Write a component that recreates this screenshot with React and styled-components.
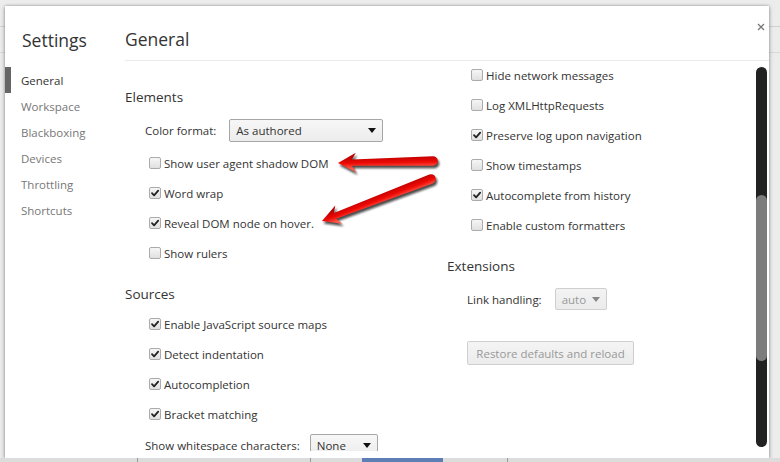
import React from 'react';
import styled, { createGlobalStyle } from 'styled-components';

const Global = createGlobalStyle`
  html, body {
    margin: 0;
    padding: 0;
  }
  body {
    font-family: "Open Sans", "Noto Sans", sans-serif;
    color: #333;
    background: #ececec;
  }
`;

const Page = styled.div`
  position: relative;
  width: 780px;
  height: 462px;
  overflow: hidden;
  padding: 6px 0 0 5px;
  box-sizing: border-box;
  background:
    linear-gradient(#d2d2d2, #d2d2d2) 0 26px / 100% 1px no-repeat,
    linear-gradient(#d8d8d8, #d8d8d8) 0 52px / 100% 1px no-repeat,
    #ececec;
`;

const Dialog = styled.div`
  width: 764px;
  height: 452px;
  background: #fff;
  display: flex;
  box-shadow: 0 0 3px rgba(0, 0, 0, 0.35), 0 2px 5px rgba(0, 0, 0, 0.18);
`;

const Sidebar = styled.div`
  width: 120px;
  flex: none;
`;

const SidebarTitle = styled.div`
  height: 61px;
  box-sizing: border-box;
  padding: 24px 0 0 17px;
  font-size: 17.5px;
  line-height: 20px;
  color: #333;
`;

const NavItem = styled.div`
  height: 25px;
  padding: 1px 0 0 16px;
  line-height: 26px;
  font-size: 11.5px;
  color: ${p => (p.$active ? '#333' : '#777')};
  box-shadow: ${p => (p.$active ? 'inset 6px 0 0 #666' : 'none')};
`;

const Main = styled.div`
  flex: 1;
  display: flex;
  flex-direction: column;
  min-width: 0;
`;

const Header = styled.div`
  height: 54px;
  border-bottom: 1px solid #eaeaea;
  display: flex;
  align-items: flex-start;
  flex: none;
`;

const HeaderTitle = styled.div`
  padding-top: 23px;
  font-size: 17.5px;
  line-height: 20px;
  color: #333;
`;

const CloseButton = styled.div`
  margin: 15px 2px 0 auto;
  width: 12px;
  height: 12px;
  display: flex;
  align-items: center;
  justify-content: center;
`;

const Scroller = styled.div`
  height: 390px;
  display: flex;
  overflow: hidden;
`;

const Columns = styled.div`
  flex: 1;
  display: flex;
  min-width: 0;
`;

const Column = styled.div`
  width: ${p => (p.$width ? `${p.$width}px` : 'auto')};
  flex: ${p => (p.$width ? 'none' : '1')};
  padding-top: ${p => p.$top || 0}px;
  margin-top: ${p => p.$shift || 0}px;
`;

const SectionTitle = styled.div`
  height: 20px;
  line-height: 20px;
  font-size: 13.5px;
  color: #333;
  margin-top: ${p => (p.$first ? 0 : 16)}px;
  margin-bottom: 5px;
`;

const Row = styled.label`
  height: 30px;
  display: flex;
  align-items: center;
  padding-left: 20px;
  font-size: 11.5px;
  color: #333;
  white-space: nowrap;
`;

const SelectRow = styled(Row)`
  height: ${p => p.$height || 36}px;
`;

const Box = styled.span`
  width: 12px;
  height: 12px;
  box-sizing: border-box;
  margin: 0 3px 0 4px;
  border: 1px solid #ababab;
  border-radius: 2px;
  background: linear-gradient(#f6f6f6, #e0e0e0);
  display: flex;
  align-items: center;
  justify-content: center;
  flex: none;
`;

const Select = styled.span`
  width: ${p => p.$width}px;
  height: ${p => p.$height || 23}px;
  box-sizing: border-box;
  margin-left: ${p => p.$gap}px;
  border: 1px solid ${p => (p.$disabled ? '#cfcfcf' : '#a6a6a6')};
  border-radius: 2px;
  background: ${p => (p.$disabled ? 'linear-gradient(#f3f3f3, #ebebeb)' : 'linear-gradient(#f7f7f7, #ececec)')};
  display: flex;
  align-items: center;
  justify-content: space-between;
  padding: 0 6px 0 6px;
  font-size: 11.5px;
  color: ${p => (p.$disabled ? '#999' : '#333')};
`;

const Caret = styled.span`
  width: 0;
  height: 0;
  border-left: 4.5px solid transparent;
  border-right: 4.5px solid transparent;
  border-top: 5px solid ${p => (p.$disabled ? '#888' : '#111')};
`;

const Button = styled.div`
  margin: 24px 0 0 20px;
  width: 167px;
  height: 24px;
  box-sizing: border-box;
  border: 1px solid #cfcfcf;
  border-radius: 2px;
  background: linear-gradient(#f4f4f4, #ececec);
  color: #999;
  font-size: 11.5px;
  display: flex;
  align-items: center;
  justify-content: center;
`;

const ScrollTrack = styled.div`
  width: 11px;
  flex: none;
  margin: 6px 2px 4px 0;
  border-radius: 6px;
  background: #222;
  display: flex;
  flex-direction: column;
  overflow: hidden;
`;

const ScrollThumb = styled.div`
  margin-top: 128px;
  height: 166px;
  border-radius: 6px;
  background: #7c7c7c;
`;

const Strip = styled.div`
  height: 4px;
  margin-left: -5px;
  display: flex;
  background: #dcdcdc;
`;

const StripPiece = styled.div`
  margin-left: ${p => p.$gap}px;
  width: ${p => p.$width}px;
  background: ${p => p.$color};
`;

const Overlay = styled.svg`
  position: absolute;
  left: 0;
  top: 0;
  pointer-events: none;
`;

const Check = () => (
  <svg width="10" height="10" viewBox="0 0 10 10">
    <path d="M2 5.2 L4.1 7.3 L8.2 2.6" fill="none" stroke="#222" strokeWidth="1.8" strokeLinecap="round" strokeLinejoin="round" />
  </svg>
);

const Checkbox = ({ checked, children }) => (
  <Row>
    <Box>{checked && <Check />}</Box>
    {children}
  </Row>
);

const Arrow = ({ x1, y1, x2, y2 }) => {
  const L = Math.hypot(x2 - x1, y2 - y1);
  const a = (Math.atan2(y2 - y1, x2 - x1) * 180) / Math.PI;
  const d = `M0,-4.8 A4.8,4.8 0 0 0 0,4.8 L${L - 14},3.1 L${L - 18},9.8 L${L},0 L${L - 18},-9.8 L${L - 14},-3.1 Z`;
  return (
    <g>
      <g transform="translate(1.5 2.5)" filter="url(#blur)" opacity="0.75">
        <path transform={`translate(${x1} ${y1}) rotate(${a})`} d={d} fill="#111" />
      </g>
      <path transform={`translate(${x1} ${y1}) rotate(${a})`} d={d} fill="url(#red)" />
    </g>
  );
};

const nav = ['General', 'Workspace', 'Blackboxing', 'Devices', 'Throttling', 'Shortcuts'];

export default function App() {
  return (
    <>
      <Global />
      <Page>
        <Dialog>
          <Sidebar>
            <SidebarTitle>Settings</SidebarTitle>
            {nav.map((n, i) => (
              <NavItem key={n} $active={i === 0}>{n}</NavItem>
            ))}
          </Sidebar>
          <Main>
            <Header>
              <HeaderTitle>General</HeaderTitle>
              <CloseButton>
                <svg width="8" height="8" viewBox="0 0 8 8">
                  <path d="M1 1 L7 7 M7 1 L1 7" stroke="#777" strokeWidth="1.3" />
                </svg>
              </CloseButton>
            </Header>
            <Scroller>
              <Columns>
                <Column $width={322} $top={26}>
                  <SectionTitle $first>Elements</SectionTitle>
                  <SelectRow>
                    Color format:
                    <Select $width={154} $gap={13}>As authored<Caret /></Select>
                  </SelectRow>
                  <Checkbox>Show user agent shadow DOM</Checkbox>
                  <Checkbox checked>Word wrap</Checkbox>
                  <Checkbox checked>Reveal DOM node on hover.</Checkbox>
                  <Checkbox>Show rulers</Checkbox>
                  <SectionTitle>Sources</SectionTitle>
                  <Checkbox checked>Enable JavaScript source maps</Checkbox>
                  <Checkbox checked>Detect indentation</Checkbox>
                  <Checkbox checked>Autocompletion</Checkbox>
                  <Checkbox checked>Bracket matching</Checkbox>
                  <SelectRow $height={32}>
                    Show whitespace characters:
                    <Select $width={68} $gap={10}>None<Caret /></Select>
                  </SelectRow>
                </Column>
                <Column $shift={-1}>
                  <Checkbox>Hide network messages</Checkbox>
                  <Checkbox>Log XMLHttpRequests</Checkbox>
                  <Checkbox checked>Preserve log upon navigation</Checkbox>
                  <Checkbox>Show timestamps</Checkbox>
                  <Checkbox checked>Autocomplete from history</Checkbox>
                  <Checkbox>Enable custom formatters</Checkbox>
                  <SectionTitle>Extensions</SectionTitle>
                  <SelectRow>
                    Link handling:
                    <Select $width={52} $height={22} $gap={13} $disabled>auto<Caret $disabled /></Select>
                  </SelectRow>
                  <Button>Restore defaults and reload</Button>
                </Column>
              </Columns>
              <ScrollTrack>
                <ScrollThumb />
              </ScrollTrack>
            </Scroller>
          </Main>
        </Dialog>
        <Strip>
          <StripPiece $gap={137} $width={1} $color="#9a9a9a" />
          <StripPiece $gap={172} $width={1} $color="#9a9a9a" />
          <StripPiece $gap={51} $width={81} $color="#5e7fb5" />
          <StripPiece $gap={64} $width={1} $color="#9a9a9a" />
        </Strip>
        <Overlay width="780" height="462" viewBox="0 0 780 462">
          <defs>
            <linearGradient id="red" x1="0" y1="-6" x2="0" y2="6" gradientUnits="userSpaceOnUse">
              <stop offset="0" stopColor="#ff5a4a" />
              <stop offset="0.45" stopColor="#ee0a05" />
              <stop offset="1" stopColor="#b80000" />
            </linearGradient>
            <filter id="blur" x="-20%" y="-50%" width="140%" height="200%">
              <feGaussianBlur stdDeviation="1.3" />
            </filter>
          </defs>
          <Arrow x1={433} y1={161} x2={338} y2={163} />
          <Arrow x1={431} y1={179} x2={322} y2={221} />
        </Overlay>
      </Page>
    </>
  );
}
